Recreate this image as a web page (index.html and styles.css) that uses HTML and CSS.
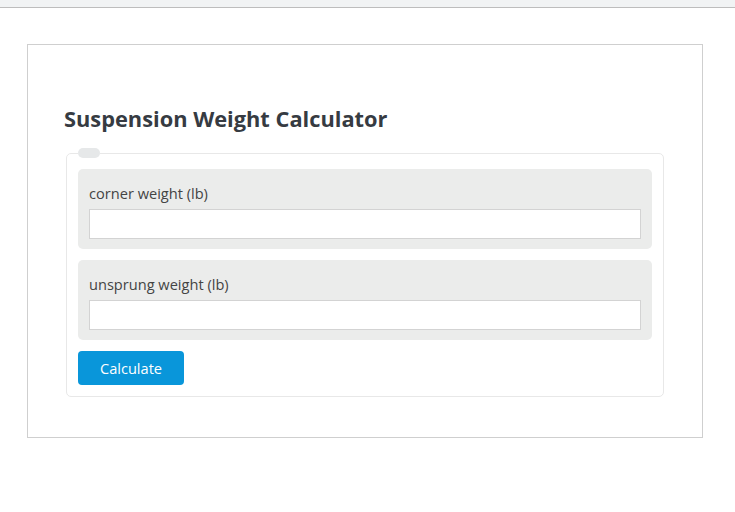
FILE: index.html
```html
<!DOCTYPE html>
<html lang="en">

<head>
    <meta charset="UTF-8" />
    <meta name="viewport" content="width=device-width, initial-scale=1.0" />
    <title>Suspension Weight Calculator</title>
    <link rel="stylesheet" href="styles.css">
</head>

<body>

    <div class="topbar"></div>

    <div class="page">
        <div class="calc">
            <h1 class="calc-title">Suspension Weight Calculator</h1>

            <form class="calc-form">
                <fieldset class="calc-fields">
                    <legend class="calc-legend"></legend>

                    <div class="field">
                        <label class="field-label" for="corner">corner weight (lb)</label>
                        <input class="field-input" type="text" id="corner">
                    </div>

                    <div class="field">
                        <label class="field-label" for="unsprung">unsprung weight (lb)</label>
                        <input class="field-input" type="text" id="unsprung">
                    </div>

                    <div class="actions">
                        <button class="btn-calc" type="button">Calculate</button>
                    </div>
                </fieldset>
            </form>
        </div>
    </div>

</body>

</html>
```

FILE: styles.css
```css
* {
    box-sizing: border-box;
}

body {
    margin: 0;
    background-color: #fff;
    font-family: "Open Sans", "Noto Sans", sans-serif;
    color: #444;
}

.topbar {
    height: 8px;
    background-color: #f1f3f4;
    border-bottom: 1px solid #bdbdbd;
}

.page {
    padding: 36px 0 0 27px;
}

.calc {
    width: 676px;
    padding: 59px 38px 40px 38px;
    border: 1px solid #cfcfcf;
}

.calc-title {
    margin: 0 0 14px -2px;
    font-size: 21.8px;
    line-height: 30px;
    font-weight: 700;
    color: #363b42;
}

.calc-form {
    margin: 0;
}

.calc-fields {
    display: flex;
    flex-direction: column;
    gap: 11px;
    margin: 0;
    padding: 11px;
    border: 1px solid #e8e8e8;
    border-radius: 5px;
}

.calc-legend {
    width: 22px;
    height: 10px;
    padding: 0;
    background-color: #e6e8e9;
    border-radius: 5px;
}

.field {
    padding: 14px 11px 10px 11px;
    background-color: #ebeceb;
    border-radius: 5px;
}

.field-label {
    display: block;
    margin-bottom: 6px;
    font-size: 14.6px;
    line-height: 20px;
    color: #444;
}

.field-input {
    display: block;
    width: 100%;
    height: 30px;
    margin: 0;
    border: 1px solid #d3d3d3;
    background-color: #fff;
}

.btn-calc {
    width: 106px;
    height: 34px;
    padding: 0;
    border: 0;
    border-radius: 4px;
    background-color: #0996da;
    color: #fff;
    font-family: "Open Sans", "Noto Sans", sans-serif;
    font-size: 14.6px;
}
```
